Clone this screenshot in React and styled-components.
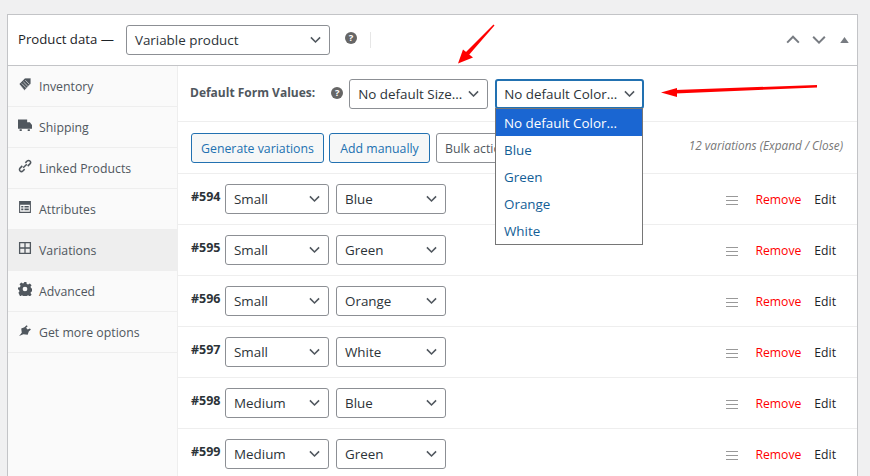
import React from 'react'
import styled, { createGlobalStyle } from 'styled-components'

const GlobalStyle = createGlobalStyle`
  html, body {
    margin: 0;
    height: 476px;
    overflow: hidden;
    background: #f0f0f1;
    font-family: 'Open Sans', 'Noto Sans', sans-serif;
    font-size: 13px;
    color: #3c434a;
  }
`

const Page = styled.div`
  padding: 14px 12px 0 7px;
  position: relative;
`

const Panel = styled.div`
  background: #fff;
  border: 1px solid #c3c4c7;
  border-bottom: 0;
`

const Header = styled.div`
  height: 50px;
  display: flex;
  align-items: center;
  padding-left: 10px;
  border-bottom: 1px solid #c3c4c7;
`

const Title = styled.span`
  font-size: 13.2px;
  color: #1d2327;
  margin-right: 12px;
  position: relative;
  top: -1px;
`

const Selectbox = styled.div`
  box-sizing: border-box;
  height: 30px;
  width: ${props => props.width}px;
  flex: none;
  display: flex;
  align-items: center;
  justify-content: space-between;
  padding: 0 ${props => props.focused ? 7 : 8}px 0 ${props => props.focused ? 7 : 8}px;
  background: #fff;
  border: ${props => props.focused ? '2px solid #2271b1' : '1px solid #8c8f94'};
  border-radius: 3px;
  color: #2c3338;
  font-size: 13.4px;
  white-space: nowrap;
  svg { flex: none; }
`

const Help = styled.span`
  width: 12px;
  height: 12px;
  flex: none;
  border-radius: 50%;
  background: #666;
  color: #fff;
  font-size: 9.5px;
  font-weight: 700;
  line-height: 12px;
  text-align: center;
  position: relative;
  top: ${props => props.top || 0}px;
  margin: ${props => props.margin || 0};
`

const Sep = styled.span`
  width: 1px;
  height: 16px;
  background: #e6e6e6;
  margin-left: 13px;
`

const HeaderActions = styled.div`
  margin-left: auto;
  display: flex;
  align-items: center;
  gap: 12px;
  padding-right: 8px;
  svg:last-child { margin-left: 2px; }
`

const Body = styled.div`
  display: flex;
  height: 420px;
`

const Sidebar = styled.ul`
  width: 169px;
  flex: none;
  margin: 0;
  padding: 0;
  list-style: none;
  background: #fafafa;
  border-right: 1px solid #eee;
`

const Tab = styled.li`
  box-sizing: border-box;
  height: 41px;
  display: flex;
  align-items: center;
  gap: 7px;
  padding-left: 10px;
  font-size: 12.3px;
  color: #50575e;
  background: ${props => props.active ? '#eee' : 'transparent'};
  border-bottom: 1px solid #eee;
  svg { flex: none; position: relative; top: -2px; }
`

const Content = styled.div`
  flex: 1;
  min-width: 0;
`

const DefaultsRow = styled.div`
  box-sizing: border-box;
  height: 56px;
  display: flex;
  align-items: center;
  padding-left: 12px;
  border-bottom: 1px solid #eee;
`

const DefaultsLabel = styled.strong`
  font-size: 12px;
  font-weight: 700;
  color: #50575e;
  position: relative;
  top: -1px;
`

const Toolbar = styled.div`
  box-sizing: border-box;
  height: 52px;
  display: flex;
  align-items: center;
  padding: 0 14px 0 13px;
  border-bottom: 1px solid #eee;
`

const Button = styled.span`
  box-sizing: border-box;
  height: 30px;
  width: ${props => props.width}px;
  flex: none;
  display: flex;
  align-items: center;
  justify-content: ${props => props.plain ? 'flex-start' : 'center'};
  padding: 1px ${props => props.plain ? '0 0 8px' : '0 0 0'};
  margin-right: ${props => props.gap}px;
  border-radius: 3px;
  font-size: 12.3px;
  white-space: nowrap;
  border: 1px solid ${props => props.plain ? '#8c8f94' : '#2271b1'};
  color: ${props => props.plain ? '#50575e' : '#2271b1'};
  background: ${props => props.plain ? '#fff' : '#f6f7f7'};
`

const Count = styled.em`
  margin-left: auto;
  font-size: 11.8px;
  color: #777;
  position: relative;
  top: -3px;
`

const Row = styled.div`
  box-sizing: border-box;
  height: 51px;
  display: flex;
  align-items: center;
  padding-left: 13px;
  border-bottom: 1px solid #eee;
`

const RowId = styled.strong`
  width: 34px;
  flex: none;
  font-size: 12.5px;
  font-weight: 700;
  color: #2c3338;
  position: relative;
  top: -3px;
`

const Gap = styled.span`
  width: ${props => props.size || 7}px;
  flex: none;
`

const RowActions = styled.div`
  margin-left: auto;
  display: flex;
  align-items: center;
  padding-right: 21px;
  font-size: 12.2px;
`

const Handle = styled.span`
  width: 12px;
  height: 9px;
  margin-right: 17px;
  position: relative;
  top: 1px;
  border-top: 1px solid #999;
  border-bottom: 1px solid #999;
  box-sizing: border-box;
  &::after {
    content: '';
    display: block;
    height: 1px;
    margin-top: 3px;
    background: #999;
  }
`

const RemoveLink = styled.span`
  color: #ff0000;
  margin-right: 13px;
`

const EditLink = styled.span`
  color: #1d2327;
`

const Dropdown = styled.ul`
  position: absolute;
  left: 495px;
  top: 108px;
  width: 148px;
  box-sizing: border-box;
  margin: 0;
  padding: 0;
  list-style: none;
  background: #fff;
  border: 1px solid #767676;
  font-size: 13.4px;
`

const Option = styled.li`
  height: 27px;
  line-height: 28px;
  padding-left: 8px;
  white-space: nowrap;
  color: ${props => props.selected ? '#fff' : '#135e96'};
  background: ${props => props.selected ? '#1a66d2' : '#fff'};
`

const Arrows = styled.svg`
  position: absolute;
  left: 0;
  top: 0;
  pointer-events: none;
`

const Chevron = ({ color = '#50575e', size = 11, up }) => (
  <svg width={size} height={size * 0.67} viewBox="0 0 12 8" fill="none" stroke={color} strokeWidth="1.7">
    <path d={up ? 'M1 6.5l5-5 5 5' : 'M1 1.500l5 5 5-5'} />
  </svg>
)

const tabs = [
  ['Inventory', <path key="i" d="M1 6.500L6.500 1H12v5l-6 6.500zM3.500 6l4 4M5 4.500l4 4M6.800 3l3.500 3.500" fill="#50575e" stroke="#fafafa" strokeWidth=".6" />],
  ['Shipping', <path key="s" d="M0 1.500h8.500V10H0zM8.500 4H11l2 2.500V10H8.500zM1.500 10.500h2V12h-2zM9 10.500h2V12H9z" fill="#50575e" />],
  ['Linked Products', <path key="l" d="M6.800 3.600l1.700-1.700a1.800 1.800 0 0 1 2.600 2.600L9 6.600M6.200 9.400l-1.700 1.700a1.800 1.800 0 0 1-2.600-2.600L4 6.400M4.800 8.200l3.400-3.400" fill="none" stroke="#50575e" strokeWidth="1.400" />],
  ['Attributes', <path key="a" fillRule="evenodd" d="M1 1h11v11H1zM2 4.500V11h9V4.500zM3 5.500h2V7H3zM6 5.500h4V7H6zM3 8h2v1.500H3zM6 8h4v1.500H6z" fill="#50575e" />],
  ['Variations', <path key="v" d="M1.500 1.500h10v10h-10zM6.500 1.500v10M1.500 6.500h10" fill="none" stroke="#50575e" strokeWidth="1.200" />],
  ['Advanced', <path key="d" fillRule="evenodd" d="M5.200 0h2.600l.3 1.800 1.300.6L11 1.400l1.600 1.600-1 1.500.6 1.300 1.800.3v2.600l-1.800.3-.6 1.300 1 1.500-1.600 1.600-1.600-1-1.300.6-.3 1.800H5.200l-.3-1.800-1.300-.6-1.600 1L.4 10l1-1.500-.6-1.300L0 6.900V5.100l1.800-.3.6-1.300-1-1.500L3 .4l1.600 1 1.300-.6zM6.500 4.300a2.200 2.200 0 1 0 0 4.400 2.200 2.200 0 0 0 0-4.400z" fill="#50575e" />],
  ['Get more options', <path key="g" d="M1 12l2.500-3L3 5l3-1 2-2 1 1-1.500 1.500L9 6l2-1 1 1-2 2-1 3-4-.5z" fill="#50575e" />],
]

const variations = [
  ['#594', 'Small', 'Blue'],
  ['#595', 'Small', 'Green'],
  ['#596', 'Small', 'Orange'],
  ['#597', 'Small', 'White'],
  ['#598', 'Medium', 'Blue'],
  ['#599', 'Medium', 'Green'],
]

const colors = ['No default Color...', 'Blue', 'Green', 'Orange', 'White']

export default function App() {
  return (
    <>
      <GlobalStyle />
      <Page>
        <Panel>
          <Header>
            <Title>Product data —</Title>
            <Selectbox width={204}>Variable product<Chevron /></Selectbox>
            <Help margin="0 0 0 15px" top={-2}>?</Help>
            <Sep />
            <HeaderActions>
              <Chevron size={14} color="#787c82" up={1} />
              <Chevron size={14} color="#787c82" />
              <svg width="9" height="6" viewBox="0 0 10 7"><path d="M5 0l5 7H0z" fill="#787c82" /></svg>
            </HeaderActions>
          </Header>
          <Body>
            <Sidebar>
              {tabs.map(([name, icon]) => (
                <Tab key={name} active={name === 'Variations' ? 1 : 0}>
                  <svg width="14" height="14" viewBox="0 0 13 13">{icon}</svg>
                  {name}
                </Tab>
              ))}
            </Sidebar>
            <Content>
              <DefaultsRow>
                <DefaultsLabel>Default Form Values:</DefaultsLabel>
                <Help margin="0 0 0 16px" top={-1}>?</Help>
                <Gap size={6} />
                <Selectbox width={139}>No default Size...<Chevron /></Selectbox>
                <Gap />
                <Selectbox width={149} focused={1}>No default Color...<Chevron /></Selectbox>
              </DefaultsRow>
              <Toolbar>
                <Button width={133} gap={5}>Generate variations</Button>
                <Button width={101} gap={6}>Add manually</Button>
                <Button width={100} gap={0} plain={1}>Bulk actions</Button>
                <Count>12 variations (Expand / Close)</Count>
              </Toolbar>
              {variations.map(([id, size, color]) => (
                <Row key={id}>
                  <RowId>{id}</RowId>
                  <Selectbox width={104}>{size}<Chevron /></Selectbox>
                  <Gap />
                  <Selectbox width={110}>{color}<Chevron /></Selectbox>
                  <RowActions>
                    <Handle />
                    <RemoveLink>Remove</RemoveLink>
                    <EditLink>Edit</EditLink>
                  </RowActions>
                </Row>
              ))}
            </Content>
          </Body>
        </Panel>
        <Dropdown>
          {colors.map((c, i) => <Option key={c} selected={i === 0 ? 1 : 0}>{c}</Option>)}
        </Dropdown>
        <Arrows width="870" height="476" viewBox="0 0 870 476">
          <path d="M493.500 24.500L465 53l3 3 26.500-30.500z" fill="#f00" />
          <path d="M458 63.500l5-14 10 8z" fill="#f00" />
          <path d="M817 85l-142 5 .2 3.500L817 87.500z" fill="#f00" />
          <path d="M661 92.500l16-4.500v9z" fill="#f00" />
        </Arrows>
      </Page>
    </>
  )
}
